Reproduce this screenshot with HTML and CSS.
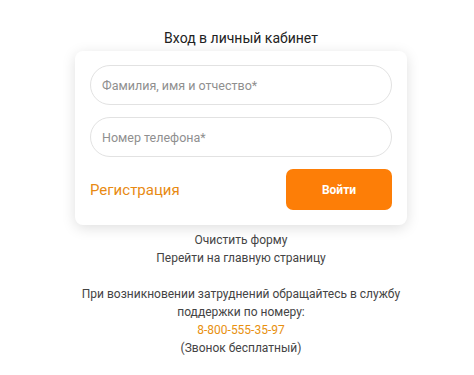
FILE: index.html
```html
<!DOCTYPE html>
<html lang="ru">
<head>
<meta charset="utf-8">
<link rel="stylesheet" href="styles.css">
</head>
<body>
<div class="wrap">
  <h1 class="title">Вход в личный кабинет</h1>
  <form class="card">
    <div class="field">Фамилия, имя и отчество*</div>
    <div class="field">Номер телефона*</div>
    <div class="actions">
      <a class="reg">Регистрация</a>
      <button type="button" class="btn">Войти</button>
    </div>
  </form>
  <div class="links">
    <div>Очистить форму</div>
    <div>Перейти на главную страницу</div>
  </div>
  <div class="help">
    <div>При возникновении затруднений обращайтесь в службу</div>
    <div>поддержки по номеру:</div>
    <div class="phone">8-800-555-35-97</div>
    <div>(Звонок бесплатный)</div>
  </div>
</div>
</body>
</html>
```
FILE: styles.css
```css
html, body { margin: 0; padding: 0; background: #fff; }
body { font-family: Roboto, "Liberation Sans", sans-serif; color: #333; }
.wrap { width: 332px; margin-left: 75px; display: flex; flex-direction: column; align-items: stretch; }
.title { margin: 0; padding-top: 30px; font-size: 14px; font-weight: 400; color: #222; text-align: center; line-height: 17px; height: 21px; }
.card { background: #fff; border-radius: 8px; box-shadow: 0 3px 14px rgba(0,0,0,0.13); padding: 14px 15px 15px; display: flex; flex-direction: column; gap: 12px; }
.field { height: 40px; box-sizing: border-box; border: 1px solid #e2e2e2; border-radius: 20px; padding: 0 11px; display: flex; align-items: center; font-size: 12.5px; color: #8f8f8f; }
.actions { display: flex; justify-content: space-between; align-items: center; }
.reg { color: #e88a12; font-size: 15px; }
.btn { width: 106px; height: 41px; border: none; border-radius: 7px; background: #fd7e07; color: #fff; font-family: inherit; font-weight: 700; font-size: 12px; }
.links, .help { text-align: center; font-size: 12px; line-height: 18px; color: #444; }
.links { margin-top: 6px; }
.help { margin-top: 18px; }
.phone { color: #e8900f; }
```
